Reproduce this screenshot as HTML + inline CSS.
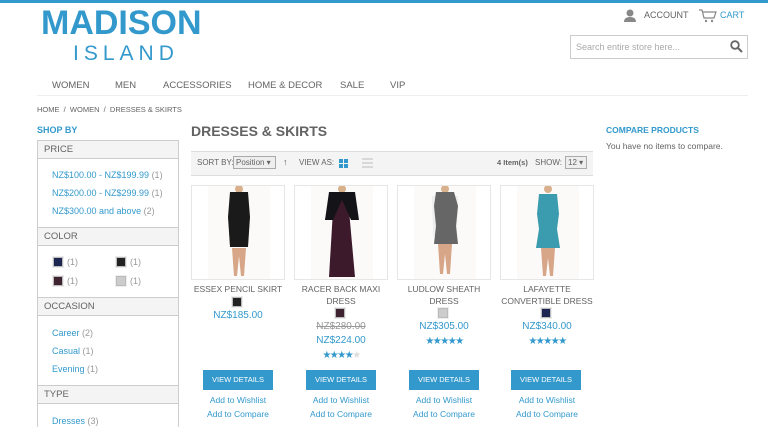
<!DOCTYPE html>
<html><head><meta charset="utf-8"><style>
*{margin:0;padding:0;box-sizing:border-box}
body{width:768px;height:427px;overflow:hidden;background:#fff;font-family:"Liberation Sans",sans-serif;color:#636363;position:relative}
.a{position:absolute;white-space:nowrap}
.blue{color:#3399cc}
.nav span{position:absolute;top:80px;font-size:9.5px;color:#636363}
.hd{position:absolute;left:37px;width:142px;height:19px;background:#f4f4f4;border:1px solid #ccc;font-size:9.5px;padding:3px 6px;color:#636363}
.side{position:absolute;left:37px;width:142px;border-left:1px solid #ccc;border-right:1px solid #ccc}
.lk{position:absolute;left:52px;font-size:9px;color:#3399cc;white-space:nowrap}
.lk i{font-style:normal;color:#999}
.sw{position:absolute;width:10px;height:10px;border:1px solid #bbb;outline:1px solid #eee}
.card{position:absolute;top:185px;width:94px;height:95px;border:1px solid #e6e6e6;overflow:hidden}
.nm{position:absolute;width:104px;text-align:center;font-size:8.5px;color:#636363;line-height:12px}
.pr{position:absolute;width:104px;text-align:center;font-size:10px;color:#3399cc}
.btn{position:absolute;top:370px;width:70px;height:20px;background:#3399cc;color:#fff;font-size:7.5px;text-align:center;line-height:20px}
.w{position:absolute;width:104px;text-align:center;font-size:8.5px;color:#3399cc}
.st{position:absolute;width:104px;text-align:center;font-size:10px;color:#3399cc;letter-spacing:-1.5px}
</style></head><body>
<div class="a" style="left:0;top:0;width:768px;height:3px;background:#3399cc"></div>
<div class="a blue" style="left:41px;top:4px;font-size:34px;font-weight:bold">MADISON</div>
<div class="a blue" style="left:73px;top:42px;font-size:21px;letter-spacing:5px">ISLAND</div>
<svg class="a" style="left:623px;top:9px" width="14" height="14" viewBox="0 0 14 14"><circle cx="7" cy="4" r="3.5" fill="#888"/><path d="M1 13 Q1 8 7 8 Q13 8 13 13Z" fill="#888"/></svg>
<div class="a" style="left:644px;top:10px;font-size:9px;color:#636363">ACCOUNT</div>
<svg class="a" style="left:699px;top:9px" width="18" height="14" viewBox="0 0 18 14"><path d="M0 1h3l2 8h10l2-6H4" fill="none" stroke="#888" stroke-width="1.2"/><circle cx="7" cy="12" r="1.2" fill="#888"/><circle cx="13" cy="12" r="1.2" fill="#888"/></svg>
<div class="a blue" style="left:720px;top:10px;font-size:9px">CART</div>
<div class="a" style="left:570px;top:35px;width:178px;height:24px;border:1px solid #ccc"></div>
<div class="a" style="left:576px;top:42px;font-size:9px;color:#aaa">Search entire store here...</div>
<svg class="a" style="left:730px;top:40px" width="13" height="13" viewBox="0 0 13 13"><circle cx="5" cy="5" r="3.8" fill="none" stroke="#666" stroke-width="1.8"/><path d="M8 8l4 4" stroke="#666" stroke-width="2"/></svg>
<div class="nav"><span style="left:52px">WOMEN</span><span style="left:115px">MEN</span><span style="left:163px">ACCESSORIES</span><span style="left:248px">HOME &amp; DECOR</span><span style="left:340px">SALE</span><span style="left:390px">VIP</span></div>
<div class="a" style="left:37px;top:95px;width:711px;height:1px;background:#eee"></div>
<div class="a" style="left:37px;top:105px;font-size:7.5px;color:#636363">HOME &nbsp;/&nbsp; WOMEN &nbsp;/&nbsp; DRESSES &amp; SKIRTS</div>
<div class="a blue" style="left:37px;top:125px;font-size:9px;font-weight:bold">SHOP BY</div>
<div class="side" style="top:140px;height:287px"></div>
<div class="hd" style="top:140px">PRICE</div>
<div class="lk" style="top:170px">NZ$100.00 - NZ$199.99 <i>(1)</i></div>
<div class="lk" style="top:188px">NZ$200.00 - NZ$299.99 <i>(1)</i></div>
<div class="lk" style="top:206px">NZ$300.00 and above <i>(2)</i></div>
<div class="hd" style="top:227px">COLOR</div>
<div class="sw" style="left:53px;top:257px;background:#1c2650"></div><div class="lk" style="left:67px;top:257px"><i>(1)</i></div>
<div class="sw" style="left:116px;top:257px;background:#222"></div><div class="lk" style="left:130px;top:257px"><i>(1)</i></div>
<div class="sw" style="left:53px;top:276px;background:#3e2430"></div><div class="lk" style="left:67px;top:276px"><i>(1)</i></div>
<div class="sw" style="left:116px;top:276px;background:#ccc"></div><div class="lk" style="left:130px;top:276px"><i>(1)</i></div>
<div class="hd" style="top:297px">OCCASION</div>
<div class="lk" style="top:328px">Career <i>(2)</i></div>
<div class="lk" style="top:346px">Casual <i>(1)</i></div>
<div class="lk" style="top:364px">Evening <i>(1)</i></div>
<div class="hd" style="top:385px">TYPE</div>
<div class="lk" style="top:416px">Dresses <i>(3)</i></div>

<div class="a" style="left:191px;top:123px;font-size:14px;font-weight:bold;color:#636363">DRESSES &amp; SKIRTS</div>
<div class="a" style="left:191px;top:151px;width:402px;height:25px;background:#f4f4f4;border-top:1px solid #ddd;border-bottom:1px solid #ddd"></div>
<div class="a" style="left:197px;top:158px;font-size:8px">SORT BY:</div>
<div class="a" style="left:233px;top:156px;width:43px;height:13px;border:1px solid #aaa;background:#eee;font-size:8px;padding:1px 2px;line-height:10px">Position ▾</div>
<div class="a" style="left:283px;top:157px;font-size:9px">↑</div>
<div class="a" style="left:299px;top:158px;font-size:8px">VIEW AS:</div>
<svg class="a" style="left:339px;top:159px" width="9" height="9"><rect x="0" y="0" width="4" height="4" fill="#3399cc"/><rect x="5" y="0" width="4" height="4" fill="#3399cc"/><rect x="0" y="5" width="4" height="4" fill="#3399cc"/><rect x="5" y="5" width="4" height="4" fill="#3399cc"/></svg>
<svg class="a" style="left:362px;top:158px" width="11" height="10"><path d="M0 1h11M0 5h11M0 9h11" stroke="#bbb"/></svg>
<div class="a" style="left:497px;top:158px;font-size:7.5px;font-weight:bold">4 Item(s)</div>
<div class="a" style="left:535px;top:158px;font-size:8px">SHOW:</div>
<div class="a" style="left:565px;top:156px;width:22px;height:13px;border:1px solid #aaa;background:#eee;font-size:8px;padding:1px 2px;line-height:10px">12 ▾</div>

<div class="card" style="left:191px"><svg width="94" height="95"><rect x="16" y="0" width="62" height="95" fill="#fcfaf8"/><circle cx="47" cy="3" r="4" fill="#d9b08c"/><path d="M38 6h18l2 25-2 30h-18l-2-30z" fill="#1a1a1a"/><path d="M40 62h14l-2 28h-3l-2-20-2 20h-3z" fill="#d7a688"/></svg></div>
<div class="card" style="left:294px"><svg width="94" height="95"><rect x="16" y="0" width="62" height="95" fill="#fcfaf8"/><circle cx="47" cy="3" r="4" fill="#d9b08c"/><path d="M36 6h22l4 28h-6l-2-10 6 67h-26l4-67-2 10h-6z" fill="#3c1a2c"/><path d="M34 6h26l4 28h-8l-9-20-9 20h-8z" fill="#141418"/></svg></div>
<div class="card" style="left:397px"><svg width="94" height="95"><rect x="16" y="0" width="62" height="95" fill="#fcfaf8"/><circle cx="47" cy="3" r="4" fill="#d9b08c"/><path d="M34 10h26l-1 40h-24z" fill="#eee"/><path d="M38 6h18l4 14-2 20 2 18h-24l2-18-2-20z" fill="#666"/><path d="M40 58h14l-2 30h-3l-2-20-2 20h-3z" fill="#d7a688"/></svg></div>
<div class="card" style="left:500px"><svg width="94" height="95"><rect x="16" y="0" width="62" height="95" fill="#fcfaf8"/><circle cx="47" cy="3" r="4" fill="#d9b08c"/><path d="M38 8h18l2 20-2 15 3 19h-24l3-19-2-15z" fill="#3a9cae"/><path d="M40 62h14l-2 28h-3l-2-18-2 18h-3z" fill="#d7a688"/></svg></div>

<div class="nm" style="left:186px;top:283px">ESSEX PENCIL SKIRT</div>
<div class="nm" style="left:289px;top:283px">RACER BACK MAXI<br>DRESS</div>
<div class="nm" style="left:392px;top:283px">LUDLOW SHEATH<br>DRESS</div>
<div class="nm" style="left:495px;top:283px">LAFAYETTE<br>CONVERTIBLE DRESS</div>
<div class="sw" style="left:232px;top:297px;background:#222"></div>
<div class="sw" style="left:335px;top:308px;background:#3e2430"></div>
<div class="sw" style="left:438px;top:308px;background:#ccc"></div>
<div class="sw" style="left:541px;top:308px;background:#1c2650"></div>
<div class="pr" style="left:186px;top:310px">NZ$185.00</div>
<div class="pr" style="left:289px;top:321px;color:#999;text-decoration:line-through">NZ$280.00</div>
<div class="pr" style="left:289px;top:335px">NZ$224.00</div>
<div class="pr" style="left:392px;top:321px">NZ$305.00</div>
<div class="pr" style="left:495px;top:321px">NZ$340.00</div>
<div class="st" style="left:289px;top:350px">★★★★<span style="color:#ddd">★</span></div>
<div class="st" style="left:392px;top:336px">★★★★★</div>
<div class="st" style="left:495px;top:336px">★★★★★</div>
<div class="btn" style="left:203px">VIEW DETAILS</div>
<div class="btn" style="left:306px">VIEW DETAILS</div>
<div class="btn" style="left:409px">VIEW DETAILS</div>
<div class="btn" style="left:511px">VIEW DETAILS</div>
<div class="w" style="left:186px;top:395px">Add to Wishlist</div><div class="w" style="left:186px;top:409px">Add to Compare</div>
<div class="w" style="left:289px;top:395px">Add to Wishlist</div><div class="w" style="left:289px;top:409px">Add to Compare</div>
<div class="w" style="left:392px;top:395px">Add to Wishlist</div><div class="w" style="left:392px;top:409px">Add to Compare</div>
<div class="w" style="left:495px;top:395px">Add to Wishlist</div><div class="w" style="left:495px;top:409px">Add to Compare</div>

<div class="a blue" style="left:606px;top:125px;font-size:8.5px;font-weight:bold">COMPARE PRODUCTS</div>
<div class="a" style="left:606px;top:141px;font-size:8.5px">You have no items to compare.</div>
</body></html>
